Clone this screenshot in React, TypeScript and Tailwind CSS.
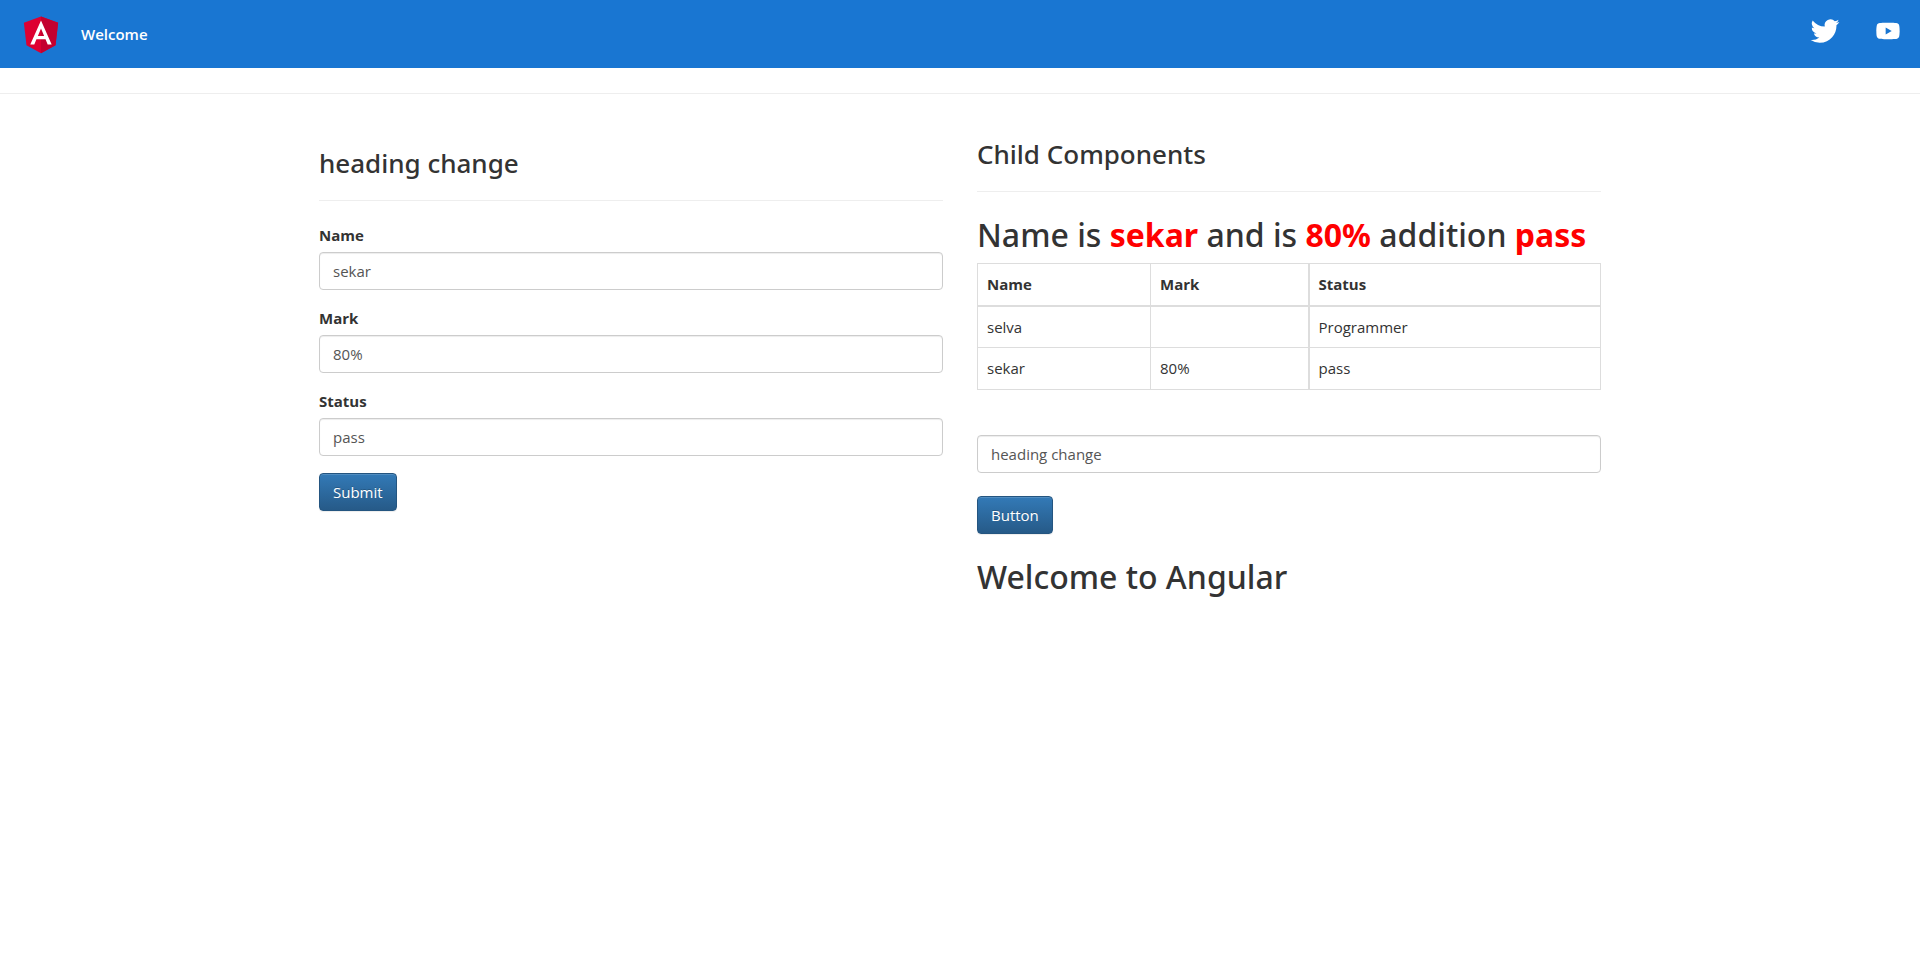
import type { ReactNode } from "react";

function AngularLogo() {
  return (
    <svg viewBox="0 0 250 250" className="size-[46px]" role="img" aria-label="Angular logo">
      <path fill="#dd0031" d="M125 30 31.9 63.2l14.2 123.1L125 230l78.9-43.7 14.2-123.1z" />
      <path fill="#c3002f" d="M125 30v22.2-.1V230l78.9-43.7 14.2-123.1L125 30z" />
      <path
        fill="#fff"
        d="M125 52.1 66.8 182.6h21.7l11.7-29.2h49.4l11.7 29.2H183L125 52.1zm17 83.3h-34l17-40.9 17 40.9z"
      />
    </svg>
  );
}

function TwitterIcon() {
  return (
    <svg viewBox="0 0 400 400" className="size-[46px]" fill="#fff" aria-hidden="true">
      <path d="M153.62,301.59c94.34,0,145.94-78.16,145.94-145.94,0-2.22,0-4.43-.15-6.63A104.36,104.36,0,0,0,325,122.47a102.38,102.38,0,0,1-29.46,8.07,51.47,51.47,0,0,0,22.55-28.37,102.79,102.79,0,0,1-32.57,12.45,51.34,51.34,0,0,0-87.41,46.78A145.62,145.62,0,0,1,92.4,107.81a51.33,51.33,0,0,0,15.88,68.47A50.91,50.91,0,0,1,85,169.86c0,.21,0,.43,0,.65a51.31,51.31,0,0,0,41.15,50.28,51.21,51.21,0,0,1-23.16.88,51.35,51.35,0,0,0,47.92,35.62,102.92,102.92,0,0,1-63.7,22A104.41,104.41,0,0,1,75,278.55a148.62,148.62,0,0,0,78.62,23" />
    </svg>
  );
}

function YoutubeIcon() {
  return (
    <svg viewBox="0 0 24 24" className="size-7" fill="#fff" aria-hidden="true">
      <path d="M21.58 7.19c-.23-.86-.91-1.54-1.77-1.77C18.25 5 12 5 12 5s-6.25 0-7.81.42c-.86.23-1.54.91-1.77 1.77C2 8.75 2 12 2 12s0 3.25.42 4.81c.23.86.91 1.54 1.77 1.77C5.75 19 12 19 12 19s6.25 0 7.81-.42c.86-.23 1.54-.91 1.77-1.77C22 15.25 22 12 22 12s0-3.25-.42-4.81zM10 15V9l5.2 3-5.2 3z" />
    </svg>
  );
}

const inputClass =
  "block h-[38px] w-full rounded border border-[#ccc] bg-white px-[13px] text-[15px] text-[#555] shadow-[inset_0_1px_1px_rgba(0,0,0,0.075)] outline-none";

const subheadingClass = "font-['Noto_Sans',sans-serif] text-[26px] leading-[34px] font-medium";
const headingClass = "font-['Noto_Sans',sans-serif] text-[32px] leading-[38px] font-medium";

function Field({ id, label, value }: { id: string; label: string; value: string }) {
  return (
    <div className="mb-[17px]">
      <label htmlFor={id} className="mb-[6px] block leading-[22px] font-bold">
        {label}
      </label>
      <input id={id} type="text" defaultValue={value} className={inputClass} />
    </div>
  );
}

function PrimaryButton({ children }: { children: ReactNode }) {
  return (
    <button
      type="button"
      className="h-[38px] rounded border border-[#245580] bg-linear-to-b from-[#337ab7] to-[#265a88] px-[13px] text-[15px] text-white shadow-[inset_0_1px_0_rgba(255,255,255,0.15),0_1px_1px_rgba(0,0,0,0.075)] [text-shadow:0_-1px_0_rgba(0,0,0,0.2)]"
    >
      {children}
    </button>
  );
}

const rows = [
  { name: "selva", mark: "", status: "Programmer" },
  { name: "sekar", mark: "80%", status: "pass" },
];

const cell = "border border-[#ddd] px-[9px] text-left";

export default function App() {
  return (
    <div className="bg-white pb-8 font-['Open_Sans','Noto_Sans',sans-serif] text-[15px] text-[#333]">
      <header className="flex h-[68px] items-center bg-[#1976d2] px-[18px] text-white">
        <AngularLogo />
        <span className="ml-[17px] font-semibold">Welcome</span>
        <nav className="mb-[6px] ml-auto flex items-center gap-[26px]">
          <a href="#twitter" aria-label="Twitter">
            <TwitterIcon />
          </a>
          <a href="#youtube" aria-label="YouTube">
            <YoutubeIcon />
          </a>
        </nav>
      </header>
      <hr className="mt-[25px] border-[#eee]" />

      <main className="mx-auto grid max-w-[1282px] grid-cols-2 gap-[34px]">
        <section className="pt-[52px]">
          <h3 className={subheadingClass}>heading change</h3>
          <hr className="mt-5 mb-[23px] border-[#eee]" />
          <form>
            <Field id="name" label="Name" value="sekar" />
            <Field id="mark" label="Mark" value="80%" />
            <Field id="status" label="Status" value="pass" />
            <PrimaryButton>Submit</PrimaryButton>
          </form>
        </section>

        <section className="pt-[43px]">
          <h3 className={subheadingClass}>Child Components</h3>
          <hr className="mt-5 mb-6 border-[#eee]" />
          <h2 className={headingClass}>
            Name is <b className="text-[#f00]">sekar</b> and is <b className="text-[#f00]">80%</b> addition{" "}
            <b className="text-[#f00]">pass</b>
          </h2>
          <table className="mt-[9px] w-full table-fixed border-collapse border border-[#ddd]">
            <colgroup>
              <col className="w-[173px]" />
              <col className="w-[158px]" />
              <col />
            </colgroup>
            <thead>
              <tr className="h-[42px]">
                <th className={`${cell} border-b-2`}>Name</th>
                <th className={`${cell} border-b-2`}>Mark</th>
                <th className={`${cell} border-b-2 border-l-2`}>Status</th>
              </tr>
            </thead>
            <tbody>
              {rows.map((row) => (
                <tr key={row.name} className="h-[42px]">
                  <td className={cell}>{row.name}</td>
                  <td className={cell}>{row.mark}</td>
                  <td className={`${cell} border-l-2`}>{row.status}</td>
                </tr>
              ))}
            </tbody>
          </table>
          <input
            type="text"
            aria-label="Heading"
            defaultValue="heading change"
            className={`${inputClass} mt-[45px] mb-[23px]`}
          />
          <PrimaryButton>Button</PrimaryButton>
          <h2 className={`${headingClass} mt-6`}>Welcome to Angular</h2>
        </section>
      </main>
    </div>
  );
}
